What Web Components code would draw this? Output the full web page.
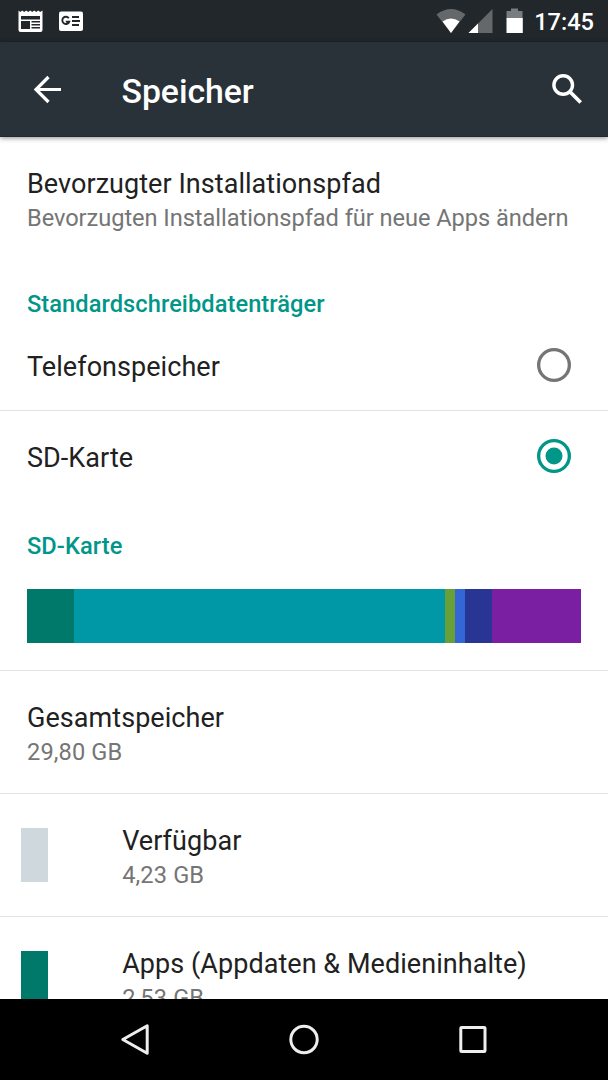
<!DOCTYPE html>
<html lang="de">
<head>
<meta charset="utf-8">
<title>Speicher</title>
<style>
html,body{margin:0;height:100%;overflow:hidden;background:#fff}
body{font-family:Roboto,"Noto Sans",sans-serif}
</style>
</head>
<body>
<storage-screen></storage-screen>
<script>
function define(name, html) {
  const t = document.createElement('template');
  t.innerHTML = html;
  customElements.define(name, class extends HTMLElement {
    constructor() {
      super();
      this.attachShadow({mode: 'open'}).appendChild(t.content.cloneNode(true));
    }
    connectedCallback() {
      for (const a of ['color', 'size'])
        if (this.hasAttribute(a)) this.style.setProperty('--' + a, this.getAttribute(a));
    }
  });
}

define('status-bar', `
<style>
:host{display:flex;align-items:center;height:42px;background:#21272b;color:#fff;box-sizing:border-box;padding:0 14px 0 18px;flex:none}
svg{display:block;flex:none}
.gap{flex:1}
time{font-size:23.6px;font-weight:500;line-height:42px;margin-left:10px;padding-top:2px}
</style>
<svg width="26" height="42" viewBox="18 0 26 42"><path fill="#fff" d="M18.500 10.500l1.700 1.600 2-1.600 2 1.600 2-1.600 2 1.600 2-1.600 2 1.600 2-1.600 2 1.600 2-1.600 2 1.600 2.300-1.600V30q0 2-2 2h-20q-2 0-2-2z"/><path fill="#21272b" d="M21 16h19v3.500H21zM21 21h9v8h-9zM31.500 21h8.500v1.500h-8.500zM31.500 24h8.500v1.500h-8.500zM31.500 27h8.500v1.500h-8.500z"/></svg>
<svg style="margin-left:15px" width="24" height="42" viewBox="59 0 24 42"><rect x="59" y="11.500" width="24" height="19.500" rx="2" fill="#fff"/><path d="M68.800 18.200A3.600 3.600 0 1 0 69.300 21.600H65.800" fill="none" stroke="#21272b" stroke-width="1.900"/><path fill="#21272b" d="M72 16h7v2h-7zM72 20h8v2h-8zM72 24h7v2h-7z"/></svg>
<span class="gap"></span>
<svg width="88" height="42" viewBox="436 0 88 42"><path fill="#64686b" d="M436.500 14.500Q451 3.500 465.500 14.500L451 33z"/><path fill="#fff" d="M442.500 21.500Q451 15.500 459.500 21.500L451 33z"/><path fill="#64686b" d="M492.500 9v24H468.500z"/><path fill="#fff" d="M478 23.500V33h-9.500z"/><path fill="#7a7d80" d="M506.500 11h4.500V8.500h7V11h4.500v7.500h-16z"/><path fill="#fff" d="M506.500 18h16.300v15h-16.300z"/></svg>
<time>17:45</time>`);

define('app-bar', `
<style>
:host{display:flex;align-items:center;height:95px;background:#283238;color:#fff;box-sizing:border-box;padding:0 24px 0 33px;flex:none;position:relative;box-shadow:0 1px 5px rgba(0,0,0,.45);border-bottom:1px solid #1f292f}
h1{flex:1;margin:0 0 0 60.500px;font-size:33.8px;font-weight:500;line-height:40px;padding-top:6px;letter-spacing:-.05px}
svg{display:block;flex:none}
</style>
<svg width="28" height="95" viewBox="33 42 28 95"><path d="M61 89.500H36.500M48.500 77L36 89.500L48.500 102" fill="none" stroke="#fff" stroke-width="3.200"/></svg>
<h1><slot></slot></h1>
<svg width="32" height="95" viewBox="552 42 32 95"><circle cx="563.200" cy="85" r="9.300" fill="none" stroke="#fff" stroke-width="3.400"/><path d="M569.700 91.500L580.700 102.500" stroke="#fff" stroke-width="3.700"/></svg>`);

define('pref-row', `
<style>
:host{display:flex;align-items:flex-start;box-sizing:border-box;height:123px;padding:29px 27px 0;border-bottom:1px solid #e3e3e3;flex:none;white-space:nowrap}
:host([plain]){border-color:transparent}
:host([choice]){height:91px}
:host([swatch]){padding-left:21px}
.text{flex:1}
.title{font-size:27px;line-height:36px;color:#212121;letter-spacing:.05px}
.sub{font-size:23.64px;line-height:28px;margin-top:2px;color:#757575;letter-spacing:.12px}
:host([long]) .sub{letter-spacing:-.055px}
</style>
<slot name="lead"></slot>
<div class="text"><div class="title"><slot></slot></div><div class="sub"><slot name="sub"></slot></div></div>
<slot name="end"></slot>`);

define('color-swatch', `
<style>:host{display:block;width:27px;height:54px;margin:5px 74.200px 0 0;background:var(--color);flex:none}</style>`);

define('section-header', `
<style>:host{display:block;box-sizing:border-box;height:60px;padding:30px 27px 0;font-size:23.64px;line-height:28px;font-weight:500;color:#009688;letter-spacing:.07px;flex:none}</style><slot></slot>`);

define('radio-mark', `
<style>
:host{display:block;margin:-1.500px 10px 0 0;color:#757575}
:host([checked]){color:#009688}
svg{display:block}
.dot{display:none}
:host([checked]) .dot{display:block}
</style>
<svg width="34" height="34" viewBox="0 0 34 34"><circle cx="17" cy="17" r="15.350" fill="none" stroke="currentColor" stroke-width="3.300"/><circle class="dot" cx="17" cy="17" r="8.500" fill="currentColor"/></svg>`);

define('usage-part', `<style>:host{display:block;flex:var(--size) 0 0;background:var(--color)}</style>`);

define('usage-bar', `
<style>
:host{display:block;box-sizing:border-box;height:109px;padding:27px 27px 0;border-bottom:1px solid #e3e3e3;flex:none}
div{display:flex;height:54px}
</style><div><slot></slot></div>`);

define('nav-bar', `
<style>
:host{display:flex;align-items:center;justify-content:space-between;box-sizing:border-box;height:81px;padding:0 119px;background:#000;flex:none}
svg{display:block}
</style>
<svg width="32" height="81" viewBox="119 999 32 81"><path d="M147.200 1025.700V1053.300L122.800 1039.500z" fill="none" stroke="#eee" stroke-width="3" stroke-linejoin="round"/></svg>
<svg width="32" height="81" viewBox="288 999 32 81"><circle cx="304" cy="1039.500" r="13.200" fill="none" stroke="#eee" stroke-width="3"/></svg>
<svg width="32" height="81" viewBox="457 999 32 81"><rect x="460.800" y="1027.500" width="24.200" height="24" rx=".8" fill="none" stroke="#eee" stroke-width="3"/></svg>`);

define('storage-screen', `
<style>
:host{display:flex;flex-direction:column;width:608px;height:1080px;background:#fff;overflow:hidden}
main{flex:1;min-height:0;overflow:hidden;display:flex;flex-direction:column}
</style>
<status-bar></status-bar>
<app-bar>Speicher</app-bar>
<main>
<pref-row plain long>Bevorzugter Installationspfad<span slot="sub">Bevorzugten Installationspfad für neue Apps ändern</span></pref-row>
<section-header>Standardschreibdatenträger</section-header>
<pref-row choice>Telefonspeicher<radio-mark slot="end"></radio-mark></pref-row>
<pref-row choice plain>SD-Karte<radio-mark slot="end" checked></radio-mark></pref-row>
<section-header>SD-Karte</section-header>
<usage-bar>
<usage-part size="47.300" color="#00796b"></usage-part><usage-part size="370.700" color="#0097a7"></usage-part><usage-part size="10" color="#689f38"></usage-part><usage-part size="10.300" color="#3367d6"></usage-part><usage-part size="26.200" color="#283593"></usage-part><usage-part size="89.500" color="#7b1fa2"></usage-part>
</usage-bar>
<pref-row>Gesamtspeicher<span slot="sub">29,80 GB</span></pref-row>
<pref-row swatch><color-swatch slot="lead" color="#cfd8dc"></color-swatch>Verfügbar<span slot="sub">4,23 GB</span></pref-row>
<pref-row swatch><color-swatch slot="lead" color="#00796b"></color-swatch>Apps (Appdaten &amp; Medieninhalte)<span slot="sub">2,53 GB</span></pref-row>
</main>
<nav-bar></nav-bar>`);
</script>
</body>
</html>
